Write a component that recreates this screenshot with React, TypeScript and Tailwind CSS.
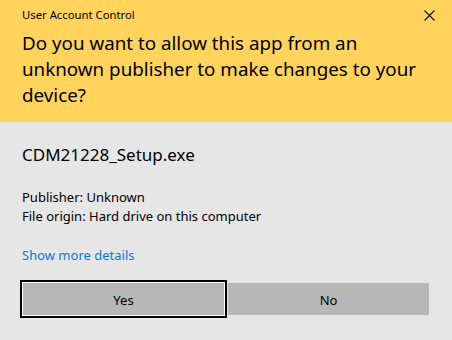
const font = { fontFamily: '"Noto Sans", "Open Sans", sans-serif' };

export default function App() {
  return (
    <div className="w-[452px] h-[340px] flex flex-col bg-[#e6e6e6] text-black" style={font}>
      <div className="h-[122px] bg-[#ffd35c] flex flex-col px-[22px]">
        <div className="h-[30px] flex items-center justify-between">
          <span className="text-[11.3px] leading-none">User Account Control</span>
          <svg width="11" height="11" viewBox="0 0 11 11" className="mr-[-5px]">
            <path d="M0.5 0.5 L10.5 10.5 M10.5 0.5 L0.5 10.5" stroke="#111" strokeWidth="1.1" fill="none" />
          </svg>
        </div>
        <h1 className="text-[18.8px] leading-[26px] whitespace-nowrap">
          Do you want to allow this app from an
          <br />
          unknown publisher to make changes to your
          <br />
          device?
        </h1>
      </div>
      <div className="flex-1 flex flex-col px-[22px]">
        <div className="mt-[22px] text-[17px] leading-[22px]">CDM21228_Setup.exe</div>
        <div className="mt-[22px] text-[13px] leading-[19px]">
          <div>Publisher: Unknown</div>
          <div>File origin: Hard drive on this computer</div>
        </div>
        <a className="mt-[20px] text-[13px] leading-[19px] text-[#0a78d8] w-fit">Show more details</a>
        <div className="mt-[18px] flex gap-[4px] pl-[1px]">
          <button className="w-[201px] h-[32px] pt-[3px] bg-[#b7b7b7] text-[13px] outline-2 outline-offset-[1px] outline-black ring-1 ring-white">
            Yes
          </button>
          <button className="w-[201px] h-[32px] pt-[3px] bg-[#b7b7b7] text-[13px]">No</button>
        </div>
      </div>
    </div>
  );
}
